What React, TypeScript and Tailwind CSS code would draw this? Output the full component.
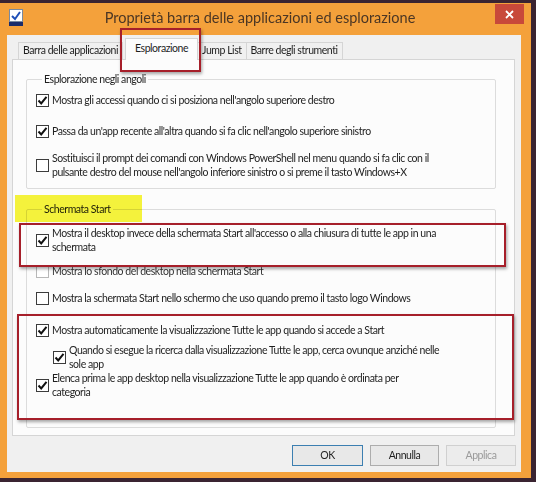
import React from 'react';

const FONT = { fontFamily: 'Lato, "Noto Sans", sans-serif' };

type CheckProps = { checked?: boolean; faded?: boolean };

const CheckBox: React.FC<CheckProps> = ({ checked, faded }) => (
  <div
    className={`w-[13px] h-[13px] shrink-0 bg-white border flex items-center justify-center ${
      faded ? 'border-[#b8b8b8]' : 'border-[#3c3c3c]'
    }`}
  >
    {checked && (
      <svg width="11" height="11" viewBox="0 0 11 11">
        <path d="M1.5 5.5 L4.2 8.4 L9.5 1.8" fill="none" stroke="#111" strokeWidth="2" />
      </svg>
    )}
  </div>
);

type RowProps = { checked?: boolean; faded?: boolean; lines: string[]; className?: string };

const Row: React.FC<RowProps> = ({ checked, faded, lines, className = '' }) => (
  <div className={`flex items-center gap-[3px] ${className}`}>
    <CheckBox checked={checked} faded={faded} />
    <div className="leading-[14px] whitespace-nowrap">
      {lines.map((l, i) => (
        <div key={i}>{l}</div>
      ))}
    </div>
  </div>
);

const tabs = ['Barra delle applicazioni', 'Esplorazione', 'Jump List', 'Barre degli strumenti'];

export default function App() {
  return (
    <div
      className="relative w-[536px] h-[482px] overflow-hidden bg-[#3a2431] text-[10.5px] tracking-[-0.45px] text-[#1e1e1e]"
      style={FONT}
    >
      {/* finestra */}
      <div className="mt-[3px] w-[531px] h-[475px] bg-[#f4a13b] flex flex-col">
        {/* barra del titolo */}
        <div className="h-[32px] flex items-start">
          <div className="ml-[9px] mt-[6px] w-[14px] h-[17px] flex flex-col">
            <div className="w-[14px] h-[13px] bg-white border border-[#7a8aa0] flex items-center justify-center">
              <svg width="10" height="10" viewBox="0 0 10 10">
                <path d="M1 5 L4 8 L9 1" fill="none" stroke="#1f4fb8" strokeWidth="2" />
              </svg>
            </div>
            <div className="w-[14px] h-[4px] bg-[#1b2c6a]" />
          </div>
          <div className="flex-1 text-center text-[14.5px] tracking-normal leading-[30px] text-[#4b3624] pl-[2px]">
            Proprietà barra delle applicazioni ed esplorazione
          </div>
          <div className="mt-[1px] mr-[7px] w-[29px] h-[20px] bg-[#c8493a] flex items-center justify-center">
            <svg width="9" height="9" viewBox="0 0 9 9">
              <path d="M1 1 L8 8 M8 1 L1 8" stroke="#fff" strokeWidth="1.8" />
            </svg>
          </div>
        </div>

        {/* area client */}
        <div className="ml-[7px] w-[514px] h-[437px] bg-[#f0f0f0] flex flex-col">
          {/* schede */}
          <div className="h-[24px] pl-[11px] pt-[3px] flex items-end">
            {tabs.map((t) =>
              t === 'Esplorazione' ? (
                <div
                  key={t}
                  className="h-[22px] -mb-px ml-[2px] px-[9px] bg-[#fcfcfc] border border-b-0 border-[#d5d5d5] leading-[18px] relative z-10"
                >
                  {t}
                </div>
              ) : (
                <div key={t} className="h-[17px] px-[4px] bg-[#f0f0f0] border border-b-0 border-[#d5d5d5] leading-[15px] -ml-px first:ml-0">
                  {t}
                </div>
              )
            )}
          </div>

          {/* pannello */}
          <div className="relative ml-[5px] w-[503px] h-[377px] bg-[#fcfcfc] border border-[#d5d5d5]">
            <fieldset className="ml-[13px] mt-[11px] w-[470px] h-[118px] border border-[#dcdcdc] rounded-[2px] pl-[9px]">
              <legend className="ml-[6px] px-[2px] leading-[16px]">Esplorazione negli angoli</legend>
              <Row checked className="mt-[6px]" lines={["Mostra gli accessi quando ci si posiziona nell'angolo superiore destro"]} />
              <Row checked className="mt-[17px]" lines={["Passa da un'app recente all'altra quando si fa clic nell'angolo superiore sinistro"]} />
              <Row
                className="mt-[13px]"
                lines={[
                  'Sostituisci il prompt dei comandi con Windows PowerShell nel menu quando si fa clic con il',
                  "pulsante destro del mouse nell'angolo inferiore sinistro o si preme il tasto Windows+X",
                ]}
              />
            </fieldset>

            <fieldset className="ml-[13px] mt-[12px] w-[470px] h-[227px] border border-[#dcdcdc] rounded-[2px] pl-[9px]">
              <legend className="ml-[6px] px-[2px] leading-[16px]">Schermata Start</legend>
              <Row
                checked
                className="mt-[9px]"
                lines={[
                  "Mostra il desktop invece della schermata Start all'accesso o alla chiusura di tutte le app in una",
                  'schermata',
                ]}
              />
              <Row faded className="mt-[10px] text-[#333]" lines={['Mostra lo sfondo del desktop nella schermata Start']} />
              <Row className="mt-[13px]" lines={['Mostra la schermata Start nello schermo che uso quando premo il tasto logo Windows']} />
              <Row checked className="mt-[18px]" lines={['Mostra automaticamente la visualizzazione Tutte le app quando si accede a Start']} />
              <Row
                checked
                className="mt-[6px] ml-[17px]"
                lines={['Quando si esegue la ricerca dalla visualizzazione Tutte le app, cerca ovunque anziché nelle', 'sole app']}
              />
              <Row
                checked
                lines={['Elenca prima le app desktop nella visualizzazione Tutte le app quando è ordinata per', 'categoria']}
              />
            </fieldset>

            {/* evidenziazioni */}
            <div className="absolute left-[6px] top-[163px] w-[487px] h-[44px] border-2 border-[#a61f2a] shadow-[1px_2px_3px_rgba(0,0,0,0.35)]" />
            <div className="absolute left-[4px] top-[254px] w-[497px] h-[106px] border-2 border-[#a61f2a] shadow-[1px_2px_3px_rgba(0,0,0,0.35)]" />
          </div>

          {/* pulsanti */}
          <div className="mt-[9px] mr-[5px] flex justify-end gap-[7px]">
            <div className="w-[71px] h-[21px] bg-[#e8e8e8] border border-[#3c7fb1] flex items-center justify-center">OK</div>
            <div className="w-[69px] h-[21px] bg-[#e8e8e8] border border-[#adadad] flex items-center justify-center">Annulla</div>
            <div className="w-[70px] h-[21px] bg-[#ececec] border border-[#d0d0d0] text-[#9a9a9a] flex items-center justify-center">Applica</div>
          </div>
        </div>
      </div>

      {/* evidenziazioni sopra la finestra */}
      <div className="absolute left-[120px] top-[28px] w-[81px] h-[44px] border-2 border-[#a61f2a] shadow-[1px_2px_3px_rgba(0,0,0,0.35)]" />
      <div className="absolute left-[15px] top-[195px] w-[127px] h-[27px] bg-[#f7f53c] mix-blend-multiply" />
    </div>
  );
}
